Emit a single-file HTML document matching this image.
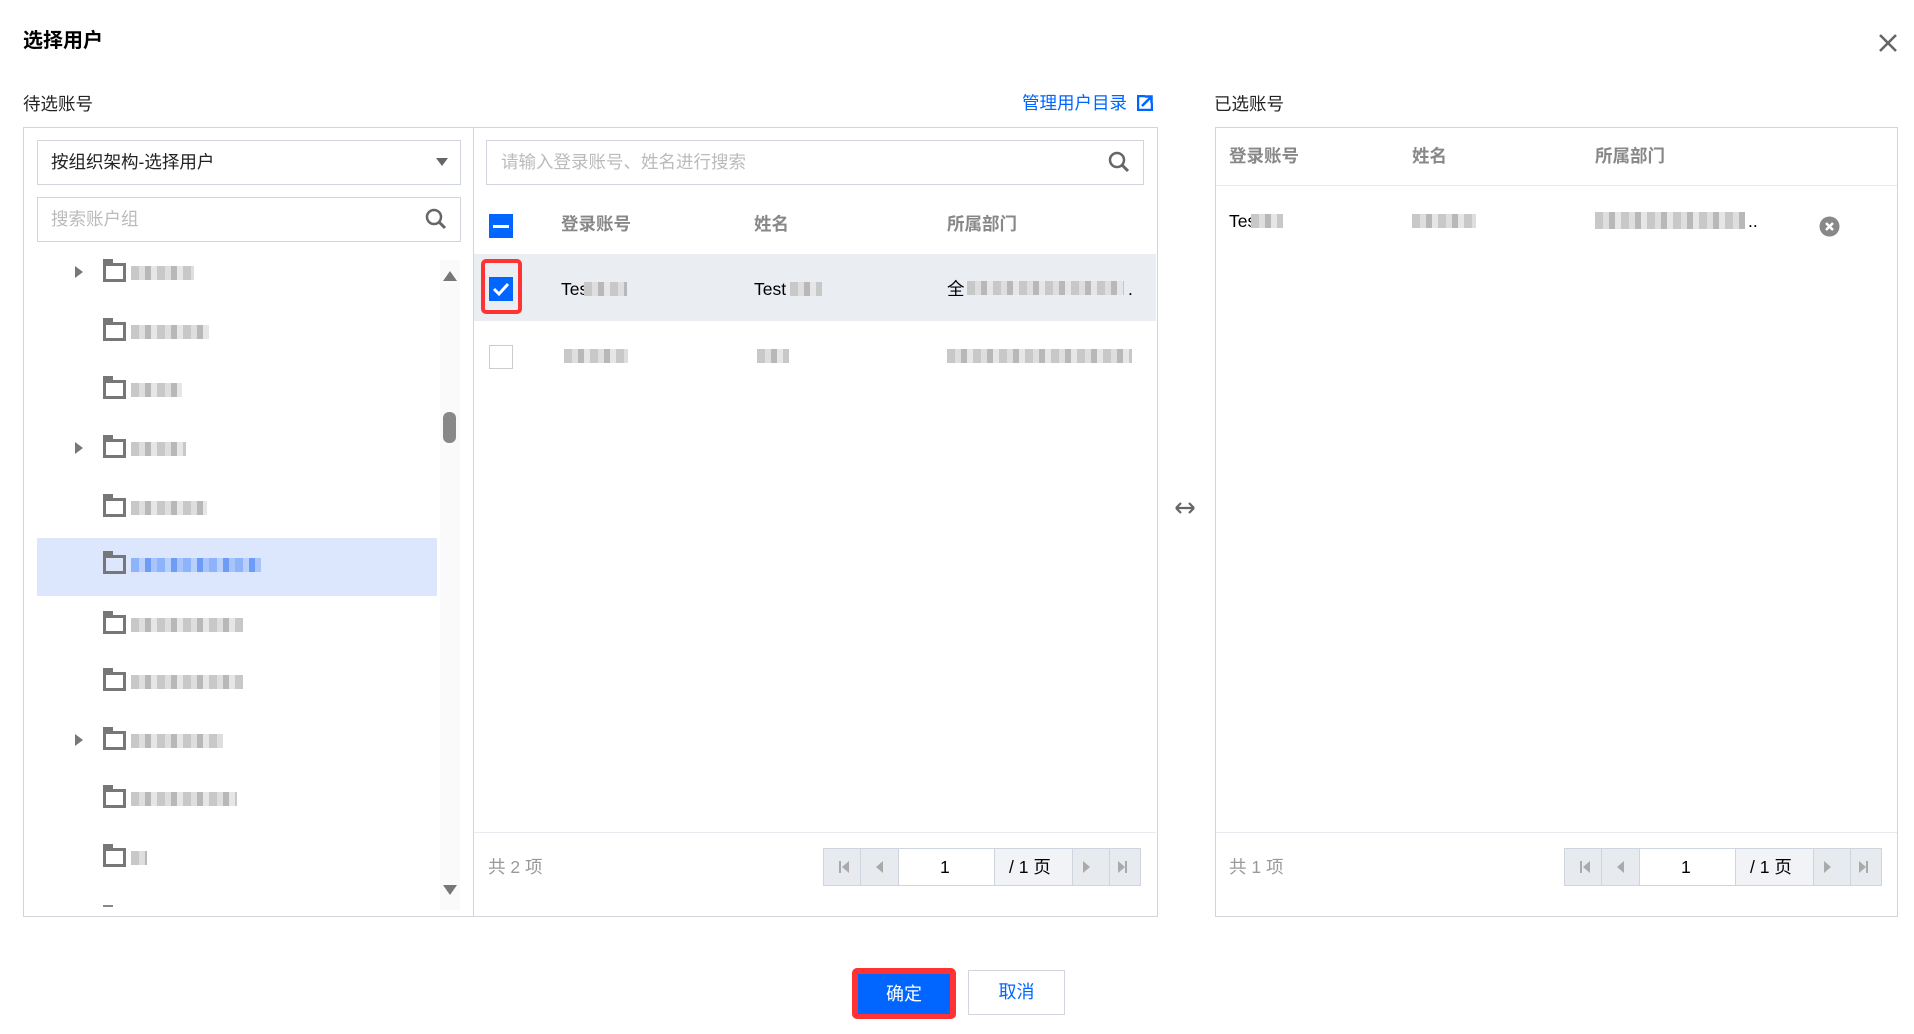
<!DOCTYPE html>
<html><head><meta charset="utf-8"><style>
*{margin:0;padding:0;box-sizing:border-box}
body{width:1914px;height:1034px;background:#fff;position:relative;overflow:hidden;font-family:"Liberation Sans","Noto Sans CJK SC",sans-serif;color:#000}
.a{position:absolute}
.t{font-size:17.5px;line-height:20px;white-space:nowrap}
.g{color:#888}
.blk{position:absolute;height:14px;background:repeating-linear-gradient(90deg,#c8c8c8 0 8px,#dedede 8px 14px,#b8b8b8 14px 20px,#e6e6e6 20px 26px)}
.fold{position:absolute;width:23px;height:19px;border:3px solid #777;border-top-width:3px}
.fold:before{content:"";position:absolute;left:-3px;top:-7px;width:10px;height:5px;background:#777}
.tri{position:absolute;width:0;height:0;border-top:6px solid transparent;border-bottom:6px solid transparent;border-left:8px solid #777}
.pg{position:absolute;height:38px;border:1px solid #cfd5de;background:#e7eaef}
.pg div{position:absolute;top:0;height:36px;border-right:1px solid #cfd5de}
</style></head><body>
<div class="a" style="left:23px;top:24px;font-size:20px;font-weight:bold">选择用户</div>
<svg class="a" style="left:1878px;top:33px" width="20" height="20"><path d="M2 2L18 18M18 2L2 18" stroke="#666" stroke-width="2.6"/></svg>

<div class="a t" style="left:23px;top:94px;color:#222">待选账号</div>
<div class="a t" style="left:1022px;top:93px;color:#0066ff">管理用户目录</div>
<svg class="a" style="left:1137px;top:95px" width="16" height="16"><rect x="1" y="1" width="14" height="14" fill="none" stroke="#0066ff" stroke-width="2.5"/><rect x="8" y="0" width="8" height="8" fill="#fff"/><path d="M5 11L14 2M8 1.5H14.5V8" stroke="#0066ff" stroke-width="2.5" fill="none"/></svg>

<div class="a" style="left:23px;top:127px;width:1135px;height:790px;border:1px solid #d0d5de"></div>
<div class="a" style="left:473px;top:128px;width:1px;height:788px;background:#d0d5de"></div>

<div class="a" style="left:37px;top:140px;width:424px;height:45px;border:1px solid #d0d5de"></div>
<div class="a t" style="left:51px;top:152px;color:#222">按组织架构-选择用户</div>
<div class="a" style="left:436px;top:158px;border-left:6px solid transparent;border-right:6px solid transparent;border-top:8px solid #666"></div>

<div class="a" style="left:37px;top:197px;width:424px;height:45px;border:1px solid #d0d5de"></div>
<div class="a t g" style="left:51px;top:209px;color:#bbb">搜索账户组</div>
<svg class="a" style="left:425px;top:208px" width="22" height="22"><circle cx="9" cy="9" r="7" fill="none" stroke="#666" stroke-width="2.5"/><path d="M14 14L20 20" stroke="#666" stroke-width="3"/></svg>

<div class="a" style="left:37px;top:538px;width:400px;height:58px;background:#dce7fd"></div>
<div class="a" style="left:440px;top:260px;width:20px;height:650px;background:#fafafa"></div>
<div class="a" style="left:443px;top:271px;border-left:7px solid transparent;border-right:7px solid transparent;border-bottom:10px solid #777"></div>
<div class="a" style="left:443px;top:885px;border-left:7px solid transparent;border-right:7px solid transparent;border-top:10px solid #777"></div>
<div class="a" style="left:443px;top:412px;width:13px;height:31px;border-radius:6px;background:#888"></div>

<div class="tri" style="left:75px;top:266px"></div>
<div class="fold" style="left:103px;top:263px"></div><div class="blk" style="left:131px;top:266px;width:63px"></div>
<div class="fold" style="left:103px;top:322px"></div><div class="blk" style="left:131px;top:325px;width:78px"></div>
<div class="fold" style="left:103px;top:380px"></div><div class="blk" style="left:131px;top:383px;width:51px"></div>
<div class="tri" style="left:75px;top:442px"></div>
<div class="fold" style="left:103px;top:439px"></div><div class="blk" style="left:131px;top:442px;width:55px"></div>
<div class="fold" style="left:103px;top:498px"></div><div class="blk" style="left:131px;top:501px;width:76px"></div>
<div class="fold" style="left:103px;top:555px"></div><div class="blk" style="left:131px;top:558px;width:130px;background:repeating-linear-gradient(90deg,#8db4fb 0 8px,#b9d0fb 8px 14px,#6d9cf7 14px 20px,#a8c4fa 20px 26px)"></div>
<div class="fold" style="left:103px;top:615px"></div><div class="blk" style="left:131px;top:618px;width:112px"></div>
<div class="fold" style="left:103px;top:672px"></div><div class="blk" style="left:131px;top:675px;width:112px"></div>
<div class="tri" style="left:75px;top:734px"></div>
<div class="fold" style="left:103px;top:731px"></div><div class="blk" style="left:131px;top:734px;width:92px"></div>
<div class="fold" style="left:103px;top:789px"></div><div class="blk" style="left:131px;top:792px;width:106px"></div>
<div class="fold" style="left:103px;top:848px"></div><div class="blk" style="left:131px;top:851px;width:16px"></div>
<div class="a" style="left:103px;top:905px;width:10px;height:2px;background:#888"></div>

<div class="a" style="left:486px;top:140px;width:658px;height:45px;border:1px solid #d0d5de"></div>
<div class="a t" style="left:501px;top:152px;color:#bbb">请输入登录账号、姓名进行搜索</div>
<svg class="a" style="left:1108px;top:151px" width="22" height="22"><circle cx="9" cy="9" r="7" fill="none" stroke="#666" stroke-width="2.5"/><path d="M14 14L20 20" stroke="#666" stroke-width="3"/></svg>

<div class="a" style="left:489px;top:214px;width:24px;height:24px;background:#0066ff"></div>
<div class="a" style="left:493px;top:225px;width:16px;height:3px;background:#fff"></div>
<div class="a t" style="left:561px;top:214px;color:#888;font-weight:bold">登录账号</div>
<div class="a t" style="left:754px;top:214px;color:#888;font-weight:bold">姓名</div>
<div class="a t" style="left:947px;top:214px;color:#888;font-weight:bold">所属部门</div>

<div class="a" style="left:474px;top:254px;width:682px;height:67px;background:#eaedf2"></div>
<div class="a" style="left:481px;top:259px;width:41px;height:55px;border:4px solid #f33;border-radius:5px"></div>
<div class="a" style="left:489px;top:277px;width:24px;height:24px;background:#0066ff"></div>
<svg class="a" style="left:489px;top:277px" width="24" height="24"><path d="M5 12L10 17L19 7" stroke="#fff" stroke-width="3" fill="none"/></svg>
<div class="a t" style="left:561px;top:279px">Tes<span style="color:#999">t</span></div>
<div class="blk" style="left:584px;top:282px;width:43px"></div>
<div class="a t" style="left:754px;top:279px">Test</div><div class="blk" style="left:790px;top:282px;width:32px"></div>
<div class="a t" style="left:947px;top:279px">全</div><div class="blk" style="left:967px;top:281px;width:157px"></div>
<div class="a t" style="left:1128px;top:279px">.</div>

<div class="a" style="left:489px;top:345px;width:24px;height:24px;border:1px solid #ccc"></div>
<div class="blk" style="left:564px;top:349px;width:64px"></div>
<div class="blk" style="left:757px;top:349px;width:32px"></div>
<div class="blk" style="left:947px;top:349px;width:185px"></div>

<div class="a" style="left:474px;top:832px;width:682px;height:1px;background:#e8ebf0"></div>
<div class="a t" style="left:488px;top:857px;color:#999">共 2 项</div>
<div class="pg" style="left:823px;top:848px;width:318px"><div style="left:0;width:37px"></div><div style="left:37px;width:38px"></div><div style="left:75px;width:96px;background:#fff"></div><div style="left:171px;width:78px;background:#f2f3f6"></div><div style="left:249px;width:37px"></div></div>
<div class="a t" style="left:940px;top:857px">1</div>
<div class="a t" style="left:1009px;top:857px">/ 1 页</div>
<div class="a" style="left:839px;top:861px;width:2px;height:12px;background:#aaa"></div><div class="a" style="left:842px;top:861px;border-top:6px solid transparent;border-bottom:6px solid transparent;border-right:7px solid #aaa"></div>
<div class="a" style="left:876px;top:861px;border-top:6px solid transparent;border-bottom:6px solid transparent;border-right:7px solid #aaa"></div>
<div class="a" style="left:1083px;top:861px;border-top:6px solid transparent;border-bottom:6px solid transparent;border-left:7px solid #aaa"></div>
<div class="a" style="left:1118px;top:861px;border-top:6px solid transparent;border-bottom:6px solid transparent;border-left:7px solid #aaa"></div><div class="a" style="left:1125px;top:861px;width:2px;height:12px;background:#aaa"></div>

<svg class="a" style="left:1173px;top:500px" width="24" height="16"><path d="M3 8H21M3 8L8 3M3 8L8 13M21 8L16 3M21 8L16 13" stroke="#666" stroke-width="2.2" fill="none"/></svg>

<div class="a t" style="left:1214px;top:94px;color:#222">已选账号</div>
<div class="a" style="left:1215px;top:127px;width:683px;height:790px;border:1px solid #d0d5de"></div>
<div class="a t" style="left:1229px;top:146px;color:#888;font-weight:bold">登录账号</div>
<div class="a t" style="left:1412px;top:146px;color:#888;font-weight:bold">姓名</div>
<div class="a t" style="left:1595px;top:146px;color:#888;font-weight:bold">所属部门</div>
<div class="a" style="left:1216px;top:185px;width:681px;height:1px;background:#e8ebf0"></div>
<div class="a t" style="left:1229px;top:211px">Tes</div><div class="blk" style="left:1251px;top:214px;width:32px"></div>
<div class="blk" style="left:1412px;top:214px;width:64px"></div>
<div class="blk" style="left:1595px;top:212px;width:150px;height:17px"></div>
<div class="a t" style="left:1748px;top:211px">..</div>
<svg class="a" style="left:1819px;top:216px" width="21" height="21"><circle cx="10.5" cy="10.5" r="10" fill="#888"/><path d="M7 7L14 14M14 7L7 14" stroke="#fff" stroke-width="2.5"/></svg>

<div class="a" style="left:1216px;top:832px;width:681px;height:1px;background:#e8ebf0"></div>
<div class="a t" style="left:1229px;top:857px;color:#999">共 1 项</div>
<div class="pg" style="left:1564px;top:848px;width:318px"><div style="left:0;width:37px"></div><div style="left:37px;width:38px"></div><div style="left:75px;width:96px;background:#fff"></div><div style="left:171px;width:78px;background:#f2f3f6"></div><div style="left:249px;width:37px"></div></div>
<div class="a t" style="left:1681px;top:857px">1</div>
<div class="a t" style="left:1750px;top:857px">/ 1 页</div>
<div class="a" style="left:1580px;top:861px;width:2px;height:12px;background:#aaa"></div><div class="a" style="left:1583px;top:861px;border-top:6px solid transparent;border-bottom:6px solid transparent;border-right:7px solid #aaa"></div>
<div class="a" style="left:1617px;top:861px;border-top:6px solid transparent;border-bottom:6px solid transparent;border-right:7px solid #aaa"></div>
<div class="a" style="left:1824px;top:861px;border-top:6px solid transparent;border-bottom:6px solid transparent;border-left:7px solid #aaa"></div>
<div class="a" style="left:1859px;top:861px;border-top:6px solid transparent;border-bottom:6px solid transparent;border-left:7px solid #aaa"></div><div class="a" style="left:1866px;top:861px;width:2px;height:12px;background:#aaa"></div>

<div class="a" style="left:852px;top:968px;width:104px;height:51px;background:#f33;border-radius:5px"></div>
<div class="a" style="left:858px;top:974px;width:92px;height:40px;background:#0066ff;color:#fff;font-size:18px;line-height:40px;text-align:center">确定</div>
<div class="a" style="left:968px;top:970px;width:97px;height:45px;border:1px solid #d0d5de;color:#0066ff;font-size:18px;line-height:43px;text-align:center">取消</div>
</body></html>
